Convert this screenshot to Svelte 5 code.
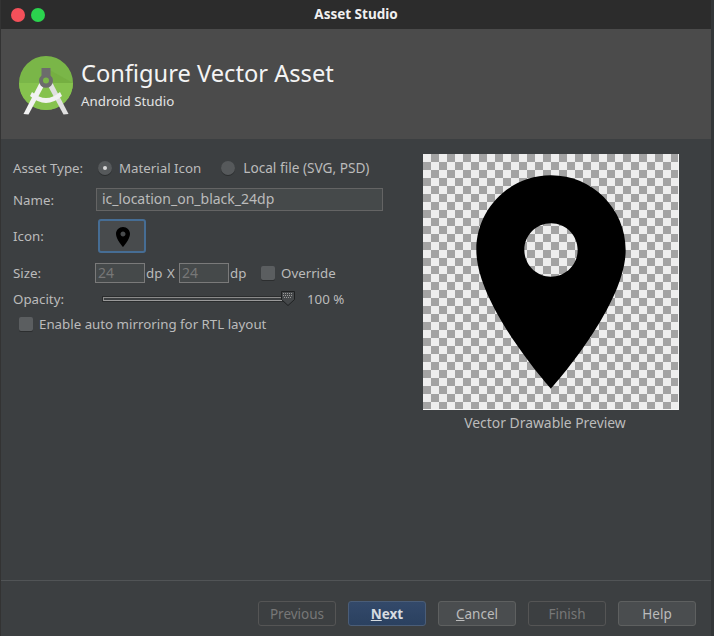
<script>
  const pin = "M12 2C8.13 2 5 5.13 5 9c0 5.25 7 13 7 13s7-7.75 7-13c0-3.87-3.13-7-7-7zm0 9.5c-1.38 0-2.5-1.12-2.5-2.5s1.12-2.5 2.5-2.5 2.5 1.12 2.5 2.5-1.12 2.5-2.5 2.5z";
  const CELLS = 32;
  const CELL = 8;
  const squares = [];
  for (let r = 0; r < CELLS; r++) {
    for (let c = 0; c < CELLS; c++) {
      if ((r + c) % 2 === 1) {
        squares.push({ x: c * CELL, y: r * CELL });
      }
    }
  }
</script>

<div class="window">
  <div class="titlebar">
    <span class="light red"></span>
    <span class="light green"></span>
    <span class="wintitle">Asset Studio</span>
  </div>
  <header class="banner">
    <svg class="logo" width="54" height="54" viewBox="0 0 54 54">
      <circle cx="27" cy="27" r="27" fill="#7ab648"/>
      <path d="M0 27a27 27 0 0 0 54 0z" fill="#86c24e"/>
      <path d="M27 12L54 27H32z" fill="#6ea63a" opacity=".45"/>
      <path d="M21 26l4.500 3L9.500 58.500 4.500 58z" fill="#f2f2f2"/>
      <path d="M33 26l-4.500 3 16 29.500 5-.5z" fill="#e0e0e0"/>
      <path d="M13 36Q27 48 41 36l2 4Q27 54 11 40z" fill="#f2f2f2"/>
      <path d="M22.500 12h9v7.500a7 7 0 1 1-9 0z" fill="#6c6c6c"/>
      <circle cx="27" cy="24.500" r="3" fill="#7ab648"/>
    </svg>
    <div class="heading">
      <h1>Configure Vector Asset</h1>
      <p>Android Studio</p>
    </div>
  </header>

  <main class="content">
    <form class="form">
      <div class="row type">
        <span class="label">Asset Type:</span>
        <span class="radio on"></span>
        <span class="opt first">Material Icon</span>
        <span class="radio"></span>
        <span class="opt local">Local file (SVG, PSD)</span>
      </div>
      <div class="row name">
        <span class="label">Name:</span>
        <div class="namefield">ic_location_on_black_24dp</div>
      </div>
      <div class="row icon">
        <span class="label">Icon:</span>
        <div class="iconbtn">
          <svg width="24" height="24" viewBox="0 0 24 24"><path d={pin} fill="#000" fill-rule="evenodd"/></svg>
        </div>
      </div>
      <div class="row size">
        <span class="label">Size:</span>
        <div class="num">24</div>
        <span class="unit">dp</span>
        <span class="x">X</span>
        <div class="num">24</div>
        <span class="unit">dp</span>
        <span class="check over"></span>
        <span class="opt">Override</span>
      </div>
      <div class="row opacity">
        <span class="label">Opacity:</span>
        <div class="slider">
          <svg class="thumb" width="16" height="17" viewBox="0 0 16 17">
            <path d="M1.500 1.500h13v8L8 15.500 1.500 9.500z" fill="#45484a" stroke="#1f2122"/>
            <path d="M3 3.500h10M3 5.500h10M4 7.500h8" stroke="#9a9a9a" stroke-dasharray="1 1"/>
          </svg>
        </div>
        <span class="pct">100 %</span>
      </div>
      <div class="row mirror">
        <span class="check"></span>
        <span class="opt">Enable auto mirroring for RTL layout</span>
      </div>
    </form>

    <figure class="preview">
      <svg class="checker" width="256" height="256" viewBox="0 0 256 256">
        <rect width="256" height="256" fill="#eeeeee"/>
        {#each squares as s}
          <rect x={s.x} y={s.y} width={CELL} height={CELL} fill="#a3a3a3" shape-rendering="crispEdges"/>
        {/each}
        <path d="M255.500 0V255.500H0" fill="none" stroke="#f6f6f6"/>
        <path d={pin} transform="scale(10.6667)" fill="#000" fill-rule="evenodd"/>
      </svg>
      <figcaption>Vector Drawable Preview</figcaption>
    </figure>
  </main>

  <footer class="footer">
    <button class="btn ghost">Previous</button>
    <button class="btn primary"><u>N</u>ext</button>
    <button class="btn solid"><u>C</u>ancel</button>
    <button class="btn ghost">Finish</button>
    <button class="btn solid">Help</button>
  </footer>
</div>

<style>
  :global(body) { margin: 0; background: #3c3f41; }
  .window {
    width: 714px; height: 636px; display: flex; flex-direction: column;
    background: #3c3f41; color: #bbbbbb; box-sizing: border-box;
    border-left: 1px solid #333; border-right: 3px solid #333638;
    font: 13.300px/16px "Noto Sans", "Open Sans", sans-serif; overflow: hidden;
  }
  .titlebar {
    height: 29px; flex: none; background: #2c2c2c; position: relative;
    display: flex; align-items: center; padding-left: 11px; gap: 6px;
    margin-right: -3px; margin-left: -1px;
  }
  .light { width: 14px; height: 14px; border-radius: 50%; }
  .red { background: #f4505a; }
  .green { background: #2bd44e; }
  .wintitle {
    position: absolute; left: 0; right: 2px; text-align: center;
    color: #f0f0f0; font-weight: 700; font-size: 13.500px; top: 6px;
  }
  .banner {
    height: 110px; flex: none; background: #4b4b4b; display: flex;
    align-items: center; padding: 0 0 2px 18px; box-sizing: border-box; gap: 8px;
  }
  .logo { flex: none; overflow: visible; }
  .heading h1 { margin: 0; font-size: 23.650px; line-height: 30px; font-weight: 400; color: #f4f4f4; }
  .heading p { margin: 5px 0 0; font-size: 13.300px; line-height: 16px; color: #e4e4e4; }

  .content { flex: 1; display: flex; align-items: flex-start; padding-top: 15px; min-height: 0; }
  .form { width: 422px; flex: none; padding: 0 0 0 12px; box-sizing: border-box; }
  .row { display: flex; align-items: center; }
  .label { width: 83px; flex: none; }
  .type { height: 28px; margin-bottom: 6px; }
  .radio {
    width: 14px; height: 14px; border-radius: 50%; background: #56595b;
    box-shadow: 0 1px 0 #2c2e2f; display: grid; place-items: center; flex: none;
  }
  .radio.on { margin-left: 2px; }
  .radio.on::after { content: ""; width: 4px; height: 4px; border-radius: 50%; background: #d8d8d8; }
  .opt { margin-left: 8px; }
  .opt.first { margin-left: 7px; margin-right: 20px; }
  .opt.local { font-size: 13.650px; }
  .name { height: 23px; margin-bottom: 8px; }
  .namefield {
    width: 287px; height: 23px; box-sizing: border-box;
    border: 1px solid #646464; background: #45494a; padding: 1px 0 0 5px; line-height: 17px;
    font-size: 14px;
  }
  .icon { height: 34px; margin-bottom: 10px; }
  .iconbtn {
    width: 48px; height: 34px; margin-left: 2px; box-sizing: border-box;
    border: 2px solid #466d94; border-radius: 3px; background: #484b4d;
    display: grid; place-items: center; padding: 1px 0 0 2px;
  }
  .iconbtn svg { display: block; }
  .size { height: 20px; margin-bottom: 6px; }
  .size .label { margin-right: -1px; }
  .num {
    width: 50px; height: 20px; box-sizing: border-box; border: 1px solid #7a7a7a;
    background: #45494a; color: #777; padding-left: 2px; line-height: 18px;
    flex: none; font-size: 14px;
  }
  .unit { margin-left: 1px; width: 15px; }
  .x { width: 12px; text-align: center; margin-left: 4px; margin-right: 2px; }
  .check {
    width: 14px; height: 14px; border-radius: 2px; background: #5b5e60;
    box-shadow: 0 1px 0 #2c2e2f; flex: none;
  }
  .check.over { margin-left: 16px; }
  .check + .opt { margin-left: 6px; }
  .opacity { height: 20px; margin-bottom: 5px; }
  .slider {
    width: 185px; height: 4px; margin-left: 7px; box-sizing: border-box; position: relative;
    border: 1px solid #8a8a8a; border-bottom-color: #9a9a9a; background: #3c3f41;
    box-shadow: 0 0 0 1px #2a2c2d;
  }
  .thumb { position: absolute; right: -9px; top: -8px; }
  .pct { margin-left: 19px; }
  .mirror { height: 20px; padding-left: 6px; }
  .preview { margin: 0; flex: none; width: 256px; }
  .checker { display: block; }
  figcaption { text-align: center; margin: 5px 0 0 -12px; font-size: 13.900px; }
  .footer {
    height: 56px; flex: none; border-top: 1px solid #515456; box-sizing: border-box;
    display: flex; gap: 12px; padding: 20px 15px 0 0; justify-content: flex-end; align-items: flex-start;
  }
  .btn {
    width: 78px; height: 25px; padding: 0; box-sizing: border-box; border-radius: 3px;
    font: inherit; font-size: 13.500px; line-height: 22px; background: transparent; border: 1px solid #555;
    color: #bbb; text-align: center;
  }
  .ghost { color: #777; }
  .solid { background: #4a4d4f; border-color: #5e6060; }
  .primary {
    background: linear-gradient(#33496a, #2b4160); border-color: #4a5d78;
    color: #d6dbe0; font-weight: 700;
  }
</style>
